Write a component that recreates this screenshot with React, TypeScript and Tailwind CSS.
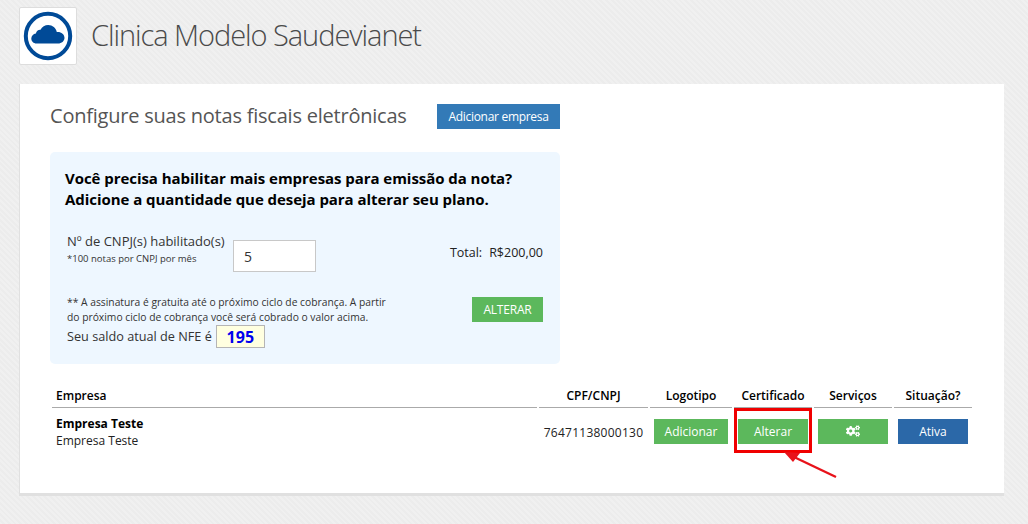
import { FaCogs } from "react-icons/fa"

const font = "font-['Open_Sans','Noto_Sans',sans-serif]"

function CloudLogo() {
  return (
    <svg viewBox="0 0 50 50" className="w-[50px] h-[50px]">
      <circle cx="25" cy="25" r="22.2" fill="none" stroke="#004a97" strokeWidth="4" />
      <path
        d="M13.5 32.500c-3 0-5.200-2.300-5.200-5 0-2.600 2-4.700 4.600-5 .4-2.400 2.400-4 4.600-3.800C19 15.800 22 14 25.200 14c4.300 0 7.800 3 8.600 7 .3 0 .6-.1 1-.1 3.700 0 6.700 2.600 6.700 5.800 0 3.300-2.900 5.800-6.500 5.800z"
        fill="#004a97"
      />
    </svg>
  )
}

function ColHead({ label, left }: { label: string; left?: boolean }) {
  return (
    <div className={`h-[23px] border-b border-[#aaaaaa] text-[12px] leading-[22px] font-semibold text-black ${left ? "pl-1" : "text-center"}`}>
      {label}
    </div>
  )
}

function RowButton({ children, blue }: { children: React.ReactNode; blue?: boolean }) {
  return (
    <div className={`h-[25px] flex items-center justify-center text-[12px] text-white ${blue ? "bg-[#2b68a8]" : "bg-[#5cb85c]"}`}>
      {children}
    </div>
  )
}

export default function App() {
  return (
    <div className={`w-[1028px] h-[524px] overflow-hidden bg-[#eeeeee] bg-[repeating-linear-gradient(45deg,#f0f0f0_0px,#f0f0f0_2px,#ececec_2px,#ececec_4px)] pl-[19px] pr-[24px] pt-[7px] ${font}`}>
      <header className="flex items-center h-[57px] mb-[20px]">
        <div className="w-[58px] h-[58px] bg-white border border-[#dddddd] rounded-[2px] flex items-center justify-center shrink-0">
          <CloudLogo />
        </div>
        <h1 className="ml-[14px] -mt-[3px] text-[29px] leading-none tracking-[-1.05px] font-light text-[#4a4a4a] whitespace-nowrap">Clinica Modelo Saudevianet</h1>
      </header>

      <main className="relative h-[412px] bg-white border-b-[3px] border-l border-[#e0e0e0] pl-[30px] pt-[20px]">
        <div className="flex items-center h-[25px]">
          <h2 className="w-[387px] -mt-[1px] text-[20px] tracking-[-0.22px] font-normal text-[#555555] whitespace-nowrap">Configure suas notas fiscais eletrônicas</h2>
          <button className="w-[123px] h-[25px] bg-[#337ab7] text-white text-[12px] tracking-[-0.3px]">Adicionar empresa</button>
        </div>

        <section className="w-[510px] h-[212px] mt-[23px] bg-[#eef7ff] rounded-[5px] pl-[15px] pr-[17px] pt-[16px] text-black">
          <p className="text-[15px] leading-[21px] font-bold tracking-[-0.05px] whitespace-nowrap">
            Você precisa habilitar mais empresas para emissão da nota?
            <br />
            Adicione a quantidade que deseja para alterar seu plano.
          </p>

          <div className="flex items-center mt-[30px] pl-[2px] h-[32px]">
            <div className="w-[166px] -mt-[16px]">
              <div className="text-[13px] leading-[20px] text-[#333333] whitespace-nowrap">Nº de CNPJ(s) habilitado(s)</div>
              <div className="mt-[1px] text-[9.5px] leading-[14px] text-[#333333] whitespace-nowrap">*100 notas por CNPJ por mês</div>
            </div>
            <div className="w-[83px] h-[32px] bg-white border border-[#c8c8c8] pl-[10px] flex items-center text-[14px] text-[#333333]">5</div>
            <div className="ml-auto -mt-[5px] text-[12.5px] text-[#222222] whitespace-nowrap">
              Total:<span className="ml-[7px]">R$200,00</span>
            </div>
          </div>

          <div className="flex items-start justify-between mt-[23px] pl-[2px]">
            <p className="text-[10.3px] leading-[15px] text-[#333333] whitespace-nowrap">
              ** A assinatura é gratuita até o próximo ciclo de cobrança. A partir
              <br />
              do próximo ciclo de cobrança você será cobrado o valor acima.
            </p>
            <button className="w-[71px] h-[25px] mt-[2px] bg-[#5cb85c] text-white text-[12px] tracking-[-0.2px]">ALTERAR</button>
          </div>

          <div className="flex items-center pl-[2px] text-[12.7px] text-[#333333]">
            <span className="whitespace-nowrap">Seu saldo atual de NFE é</span>
            <span className="ml-[4px] w-[49px] h-[23px] bg-[#ffffe0] border border-[#b5b5b5] flex items-center justify-center text-[16px] font-bold text-[#0000ee]">195</span>
          </div>
        </section>

        <section className="relative mt-[21px] ml-[2px] w-[920px] grid grid-cols-[485px_109px_82px_78px_78px_78px] gap-x-[2px] text-[12px] text-[#222222]">
          <ColHead label="Empresa" left />
          <ColHead label="CPF/CNPJ" />
          <ColHead label="Logotipo" />
          <ColHead label="Certificado" />
          <ColHead label="Serviços" />
          <ColHead label="Situação?" />

          <div className="pl-1 pt-[7px] leading-[17px]">
            <div className="font-bold text-black">Empresa Teste</div>
            <div>Empresa Teste</div>
          </div>
          <div className="pt-[16px] leading-[18px] text-center whitespace-nowrap tracking-[0.25px]">76471138000130</div>
          <div className="pt-[11px] px-[4px]"><RowButton>Adicionar</RowButton></div>
          <div className="pt-[11px] px-[4px]"><RowButton>Alterar</RowButton></div>
          <div className="pt-[11px] px-[4px]">
            <RowButton>
              <FaCogs className="w-[14px] h-[14px] -mt-[2px]" />
            </RowButton>
          </div>
          <div className="pt-[11px] px-[4px]"><RowButton blue>Ativa</RowButton></div>

          {/* marcação vermelha por cima do botão */}
          <div className="absolute left-[682px] top-[23px] w-[78px] h-[45px] border-[3px] border-[#f00000]" />
          <svg className="absolute left-[724px] top-[64px]" width="70" height="40" viewBox="0 0 70 40">
            <path d="M60 28 L18 8" stroke="#e8121a" strokeWidth="2.4" fill="none" />
            <path d="M8 3 L24 4 L17 13 Z" fill="#e8121a" />
          </svg>
        </section>
      </main>
    </div>
  )
}
